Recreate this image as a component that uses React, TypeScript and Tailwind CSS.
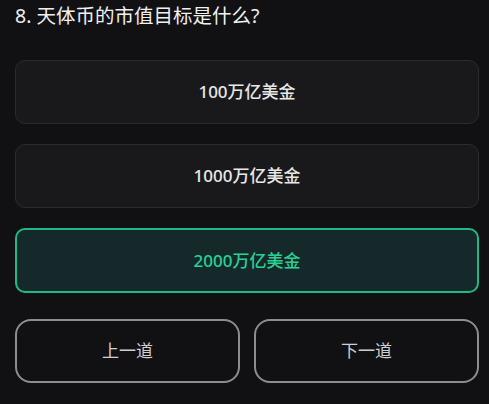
import React from "react";

export default function App() {
  const options = [
    { label: "100万亿美金", selected: false },
    { label: "1000万亿美金", selected: false },
    { label: "2000万亿美金", selected: true },
  ];
  return (
    <div
      className="w-[489px] h-[404px] bg-[#111114] pl-[15px] pr-[10px] overflow-hidden"
      style={{ fontFamily: '"Noto Sans", "Noto Sans CJK SC", sans-serif' }}
    >
      <div className="h-[34px] flex items-center text-[19.5px] text-[#f0f0f0] -mt-[1px]">
        8. 天体币的市值目标是什么?
      </div>
      <div className="mt-[27px] flex flex-col gap-[20px]">
        {options.map((o) => (
          <div
            key={o.label}
            className={
              o.selected
                ? "h-[65px] rounded-[10px] border-2 border-[#1fb987] bg-[#16292a] flex items-center justify-center text-[17px] font-medium text-[#2ad196]"
                : "h-[64px] rounded-[10px] border border-[#2c2c30] bg-[#19191b] flex items-center justify-center text-[17px] font-medium text-[#e8e8e8]"
            }
          >
            {o.label}
          </div>
        ))}
      </div>
      <div className="mt-[26px] grid grid-cols-2 gap-[14px]">
        <div className="h-[64px] rounded-[16px] border-2 border-[#8d8d8f] flex items-center justify-center text-[17px] text-[#cfcfcf]">
          上一道
        </div>
        <div className="h-[64px] rounded-[16px] border-2 border-[#8d8d8f] flex items-center justify-center text-[17px] text-[#cfcfcf]">
          下一道
        </div>
      </div>
    </div>
  );
}
